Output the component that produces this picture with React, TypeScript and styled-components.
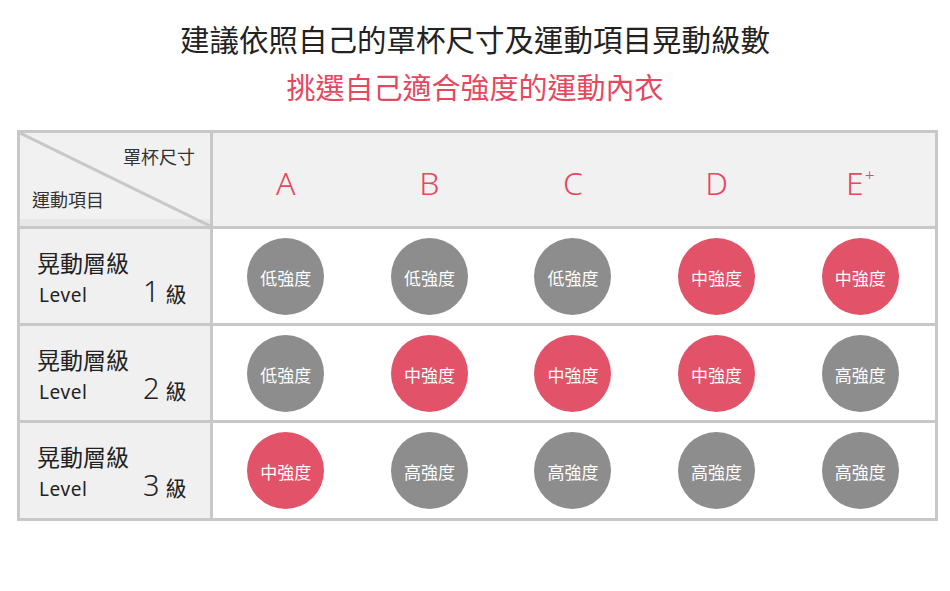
import * as React from 'react'
import styled, {createGlobalStyle} from 'styled-components'

const LINE = '#c8c8c8'
const RED = '#e6485f'

const GlobalStyle = createGlobalStyle`
  html, body {
    margin: 0;
    padding: 0;
    background: #ffffff;
  }
  body {
    font-family: "Noto Sans", "Noto Sans CJK TC", sans-serif;
    color: #333;
  }
`

const SPage = styled.div`
  width: 950px;
  height: 591px;
  padding-top: 19px;
  box-sizing: border-box;
`

const STitle = styled.h1`
  margin: 0;
  text-align: center;
  font-family: "Noto Sans CJK TC", sans-serif;
  font-weight: 400;
  font-size: 29.5px;
  line-height: 38px;
  color: #222;
`

const SSubTitle = styled.h2`
  margin: 10px 0 0;
  text-align: center;
  font-family: "Noto Sans CJK TC", sans-serif;
  font-weight: 400;
  font-size: 29px;
  line-height: 38px;
  color: ${RED};
`

const STable = styled.div`
  margin: 25px 0 0 17px;
  width: 921px;
  display: grid;
  grid-template-columns: 190px 1fr;
  grid-template-rows: 93px 94px 94px 95px;
  gap: 3px;
  padding: 3px;
  box-sizing: border-box;
  background: ${LINE};
`

const SCorner = styled.div`
  position: relative;
  background: #f1f1f1;
  box-shadow: inset 0 -7px 0 #e8e8e8;
  font-family: "Noto Sans CJK TC", sans-serif;
  font-size: 18px;
  color: #333;
`

const SDiagonal = styled.svg`
  position: absolute;
  inset: 0;
  width: 100%;
  height: 100%;
`

const SCornerTop = styled.span`
  position: absolute;
  right: 15px;
  top: 10px;
`

const SCornerBottom = styled.span`
  position: absolute;
  left: 12px;
  top: 53px;
`

const SHeadRow = styled.div`
  background: #f1f1f1;
  display: grid;
  grid-template-columns: repeat(5, 1fr);
  padding: 6px 3px 0 1px;
  align-items: center;
`

const SCup = styled.div`
  text-align: center;
  font-family: "Noto Sans", sans-serif;
  font-weight: 300;
  font-size: 32px;
  color: ${RED};

  & sup {
    font-size: 17px;
    margin-left: 1px;
    position: relative;
    top: -2px;
  }
`

const SLevelCell = styled.div`
  background: #f0f0f0;
  padding: 18px 0 0 17px;
  font-family: "Noto Sans CJK TC", sans-serif;
  color: #222;
`

const SLevelName = styled.div`
  font-size: 23px;
  line-height: 30px;
`

const SLevelLine = styled.div`
  display: flex;
  align-items: baseline;
  margin-top: -6px;
`

const SLevelEn = styled.span`
  font-family: "Noto Sans", sans-serif;
  font-size: 19px;
  width: 104px;
  letter-spacing: 0.6px;
  padding-left: 2px;
`

const SLevelNum = styled.span`
  font-family: "Noto Sans", sans-serif;
  font-weight: 300;
  font-size: 29px;
  margin-right: 6px;
`

const SLevelUnit = styled.span`
  font-size: 21px;
`

const SDataRow = styled.div`
  background: #ffffff;
  display: grid;
  grid-template-columns: repeat(5, 1fr);
  padding: 0 3px 0 1px;
  align-items: center;
  justify-items: center;
`

const SBadge = styled.div<{$high: boolean}>`
  width: 77px;
  height: 77px;
  border-radius: 50%;
  background: ${({$high}) => ($high ? '#e25369' : '#8d8d8d')};
  color: #ffffff;
  display: flex;
  align-items: center;
  justify-content: center;
  padding-top: 2px;
  box-sizing: border-box;
  font-family: "Noto Sans CJK TC", sans-serif;
  font-size: 17px;
`

const cups = ['A', 'B', 'C', 'D', 'E']

const rows = [
  {level: '1', values: ['低強度', '低強度', '低強度', '中強度', '中強度']},
  {level: '2', values: ['低強度', '中強度', '中強度', '中強度', '高強度']},
  {level: '3', values: ['中強度', '高強度', '高強度', '高強度', '高強度']},
]

export default function App() {
  return (
    <SPage>
      <GlobalStyle/>
      <STitle>建議依照自己的罩杯尺寸及運動項目晃動級數</STitle>
      <SSubTitle>挑選自己適合強度的運動內衣</SSubTitle>
      <STable>
        <SCorner>
          <SDiagonal viewBox="0 0 190 93" preserveAspectRatio="none">
            <line x1="0" y1="0" x2="190" y2="93" stroke={LINE} strokeWidth="3"/>
          </SDiagonal>
          <SCornerTop>罩杯尺寸</SCornerTop>
          <SCornerBottom>運動項目</SCornerBottom>
        </SCorner>
        <SHeadRow>
          {cups.map(c => (
            <SCup key={c}>
              {c}
              {c === 'E' && <sup>+</sup>}
            </SCup>
          ))}
        </SHeadRow>
        {rows.map(r => (
          <React.Fragment key={r.level}>
            <SLevelCell>
              <SLevelName>晃動層級</SLevelName>
              <SLevelLine>
                <SLevelEn>Level</SLevelEn>
                <SLevelNum>{r.level}</SLevelNum>
                <SLevelUnit>級</SLevelUnit>
              </SLevelLine>
            </SLevelCell>
            <SDataRow>
              {r.values.map((v, i) => (
                <SBadge key={i} $high={v === '中強度'}>{v}</SBadge>
              ))}
            </SDataRow>
          </React.Fragment>
        ))}
      </STable>
    </SPage>
  )
}
